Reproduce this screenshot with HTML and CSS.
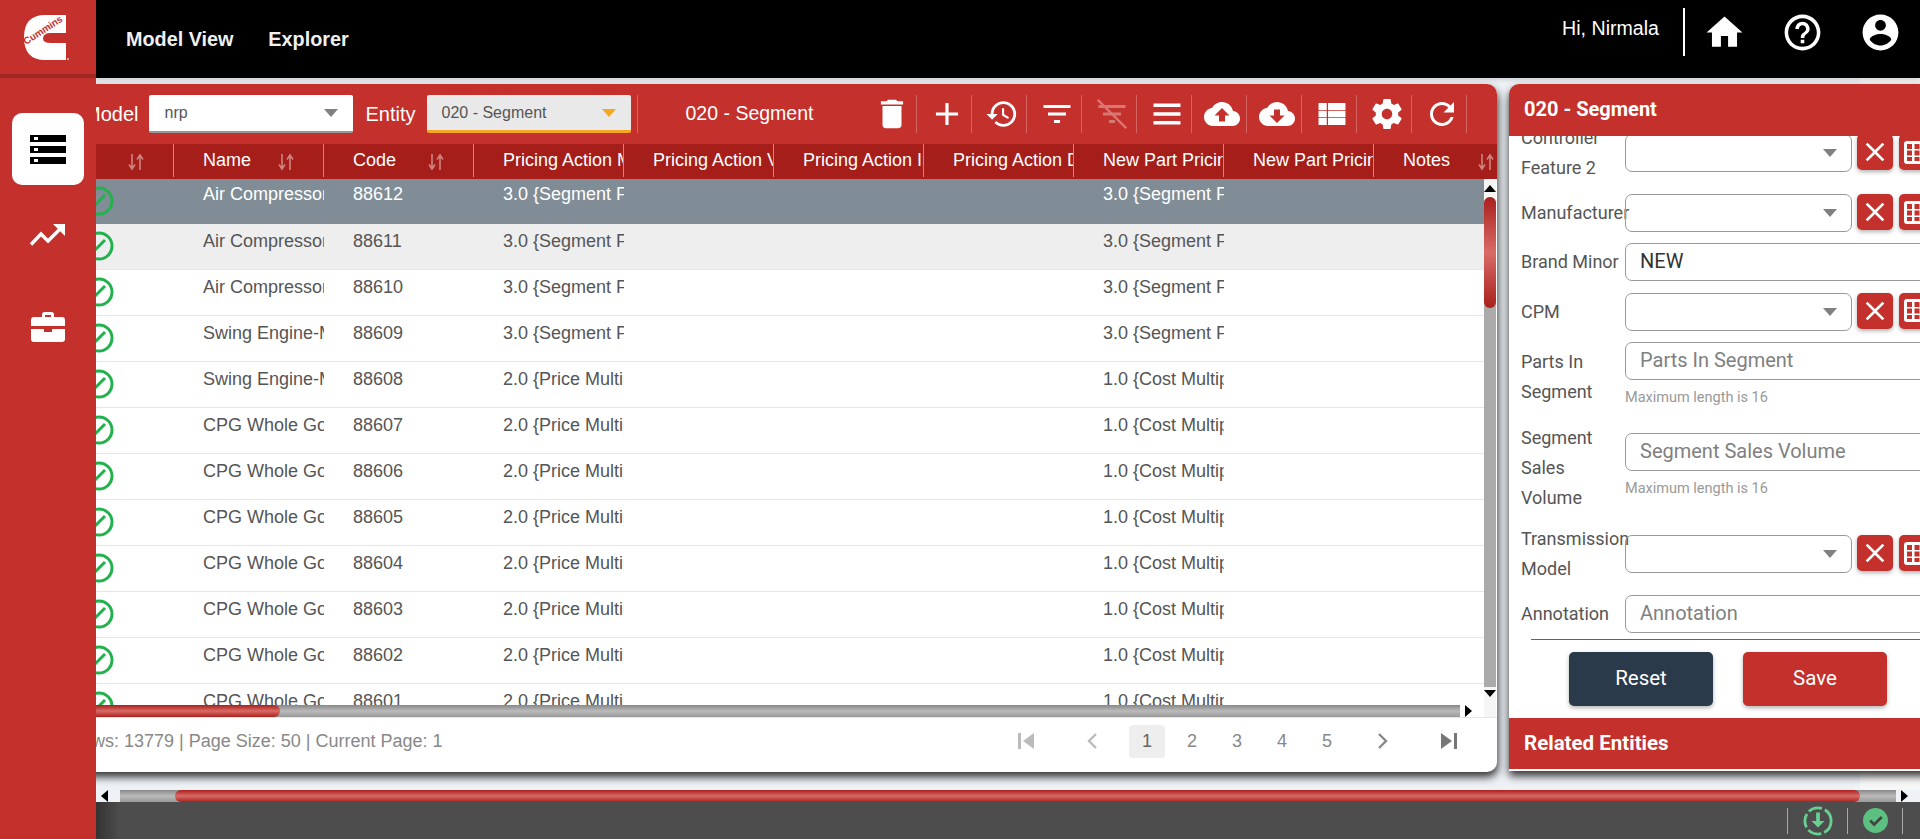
FILE: index.html
```html
<!DOCTYPE html>
<html lang="en">
<head>
    <meta charset="UTF-8">
    <meta name="viewport" content="width=device-width, initial-scale=1.0">
    <title>Model View - Segment</title>
    <link rel="stylesheet" href="styles.css">
</head>
<body>
<div class="app">
    <aside class="sidebar">
        <div class="logo">
            <svg width="96" height="74" viewBox="0 0 96 74">
                <path fill="#fff" d="M66 15V33H51Q43 33 43 38.500Q43 43 51 43H66V60H45Q24 60 24 37.500Q24 15 45 15Z"/>
                <text class="logo-text" x="0" y="0" transform="translate(26 45) rotate(-33)">Cummins</text>
                <circle cx="68" cy="59" r="1" fill="#f0c8c6"/>
            </svg>
        </div>
        <a class="side-item active">
            <svg width="36" height="30" viewBox="0 0 36 30">
                <rect x="0" y="1" width="36" height="7"/><rect x="0" y="12" width="36" height="7"/><rect x="0" y="23" width="36" height="7"/>
                <rect x="4" y="3" width="4" height="3" fill="#fff"/><rect x="4" y="14" width="4" height="3" fill="#fff"/><rect x="4" y="25" width="4" height="3" fill="#fff"/>
            </svg>
        </a>
        <a class="side-item">
            <svg width="38" height="24" viewBox="0 0 38 24">
                <path fill="none" stroke="#fff" stroke-width="3.400" d="M2 21.500L12 11l7 7L31 6"/>
                <path fill="#fff" d="M24 1H36V13Z"/>
            </svg>
        </a>
        <a class="side-item">
            <svg width="36" height="32" viewBox="0 0 36 32">
                <path fill="#fff" d="M12 6V3.500Q12 1 14.500 1h7Q24 1 24 3.500V6h8q3 0 3 3v6H1V9q0-3 3-3zm3-2v2h6V4zM1 18h13v3h8v-3h13v10q0 3-3 3H4q-3 0-3-3z"/>
            </svg>
        </a>
    </aside>

    <div class="main">
        <header class="topbar">
            <nav class="topnav">
                <a>Model View</a>
                <a>Explorer</a>
            </nav>
            <div class="userbox">
                <span class="hello">Hi, Nirmala</span>
                <svg class="top-icon home" viewBox="0 0 24 24"><path d="M10 20v-6h4v6h5v-8h3L12 3 2 12h3v8z"/></svg>
                <svg class="top-icon" viewBox="0 0 24 24"><path d="M11 18h2v-2h-2v2zm1-16C6.480 2 2 6.480 2 12s4.480 10 10 10 10-4.480 10-10S17.520 2 12 2zm0 18c-4.410 0-8-3.590-8-8s3.590-8 8-8 8 3.590 8 8-3.590 8-8 8zm0-14c-2.210 0-4 1.790-4 4h2c0-1.100.9-2 2-2s2 .9 2 2c0 2-3 1.750-3 5h2c0-2.250 3-2.500 3-5 0-2.210-1.790-4-4-4z"/></svg>
                <svg class="top-icon" viewBox="0 0 24 24"><path d="M12 2C6.480 2 2 6.480 2 12s4.480 10 10 10 10-4.480 10-10S17.520 2 12 2zm0 3c1.660 0 3 1.340 3 3s-1.340 3-3 3-3-1.340-3-3 1.340-3 3-3zm0 14.200c-2.500 0-4.710-1.280-6-3.220.03-1.990 4-3.080 6-3.080 1.990 0 5.970 1.090 6 3.080-1.290 1.940-3.500 3.220-6 3.220z"/></svg>
            </div>
        </header>

        <div class="workspace">
            <section class="grid-panel">
                <div class="toolbar">
                    <label class="tool-label">Model</label>
                    <div class="tool-select"><span>nrp</span><i class="caret"></i></div>
                    <label class="tool-label">Entity</label>
                    <div class="tool-select focused"><span>020 - Segment</span><i class="caret"></i></div>
                    <span class="tool-title">020 - Segment</span>
                    <div class="tool-buttons">
                        <button class="tool-btn"><svg viewBox="0 0 24 24" width="38" height="38"><path d="M6 19c0 1.100.9 2 2 2h8c1.100 0 2-.9 2-2V7H6v12zM19 4h-3.500l-1-1h-5l-1 1H5v2h14V4z"/></svg></button>
                        <button class="tool-btn"><svg viewBox="0 0 24 24" width="38" height="38"><path d="M19 13h-6v6h-2v-6H5v-2h6V5h2v6h6v2z"/></svg></button>
                        <button class="tool-btn"><svg viewBox="0 0 24 24" width="34" height="34"><path d="M13 3c-4.970 0-9 4.030-9 9H1l3.890 3.890.07.14L9 12H6c0-3.870 3.130-7 7-7s7 3.130 7 7-3.130 7-7 7c-1.930 0-3.680-.79-4.940-2.060l-1.420 1.420C8.270 19.990 10.510 21 13 21c4.970 0 9-4.030 9-9s-4.030-9-9-9zm-1 5v5l4.280 2.540.72-1.210-3.500-2.080V8H12z"/></svg></button>
                        <button class="tool-btn"><svg viewBox="0 0 24 24" width="36" height="36"><path d="M10 18h4v-2h-4v2zM3 6v2h18V6H3zm3 7h12v-2H6v2z"/></svg></button>
                        <button class="tool-btn off"><svg viewBox="0 0 24 24" width="36" height="36"><path d="M10 18h4v-2h-4v2zM3 6v2h18V6H3zm3 7h12v-2H6v2z"/><path d="M2.500 2.500l19 19" stroke="#fff" stroke-width="1.600"/></svg></button>
                        <button class="tool-btn"><svg viewBox="0 0 24 24" width="36" height="36"><path d="M3 19h18v-2.300H3zm0-5.800h18v-2.400H3zM3 5v2.300h18V5z"/></svg></button>
                        <button class="tool-btn"><svg viewBox="0 0 24 24" width="36" height="36"><path d="M19.350 10.040C18.670 6.590 15.640 4 12 4 9.110 4 6.600 5.640 5.350 8.040 2.340 8.360 0 10.910 0 14c0 3.310 2.690 6 6 6h13c2.760 0 5-2.240 5-5 0-2.640-2.050-4.780-4.650-4.960zM14 13v4h-4v-4H7l5-5 5 5h-3z"/></svg></button>
                        <button class="tool-btn"><svg viewBox="0 0 24 24" width="36" height="36"><path d="M19.350 10.040C18.670 6.590 15.640 4 12 4 9.110 4 6.600 5.640 5.350 8.040 2.340 8.360 0 10.910 0 14c0 3.310 2.690 6 6 6h13c2.760 0 5-2.240 5-5 0-2.640-2.050-4.780-4.650-4.960zM17 13l-5 5-5-5h3V9h4v4h3z"/></svg></button>
                        <button class="tool-btn"><svg viewBox="0 0 24 24" width="38" height="38"><path d="M3.500 5h5.200v4.400H3.500zm6 0h11v4.400h-11zm-6 5h5.200v4H3.500zm6 0h11v4h-11zm-6 4.600h5.200V19H3.500zm6 0h11V19h-11z"/></svg></button>
                        <button class="tool-btn"><svg viewBox="0 0 24 24" width="36" height="36"><path d="M19.430 12.980c.04-.32.07-.64.07-.98s-.03-.66-.07-.98l2.110-1.650c.19-.15.24-.42.12-.64l-2-3.460c-.12-.22-.39-.3-.61-.22l-2.490 1c-.52-.4-1.080-.73-1.690-.98l-.38-2.650C14.460 2.180 14.250 2 14 2h-4c-.25 0-.46.18-.49.42l-.38 2.650c-.61.25-1.170.59-1.690.98l-2.490-1c-.23-.09-.49 0-.61.22l-2 3.460c-.13.22-.07.49.12.64l2.110 1.650c-.04.32-.07.65-.07.98s.03.66.07.98l-2.110 1.650c-.19.15-.24.42-.12.64l2 3.460c.12.22.39.3.61.22l2.490-1c.52.4 1.080.73 1.690.98l.38 2.650c.03.24.24.42.49.42h4c.25 0 .46-.18.49-.42l.38-2.650c.61-.25 1.170-.59 1.690-.98l2.490 1c.23.09.49 0 .61-.22l2-3.460c.12-.22.07-.49-.12-.64l-2.110-1.650zM12 15.500c-1.930 0-3.500-1.570-3.500-3.500s1.570-3.500 3.500-3.500 3.500 1.570 3.500 3.500-1.570 3.500-3.500 3.500z"/></svg></button>
                        <button class="tool-btn"><svg viewBox="0 0 24 24" width="36" height="36"><path d="M17.650 6.350C16.200 4.900 14.210 4 12 4c-4.420 0-7.990 3.580-7.990 8s3.570 8 7.990 8c3.730 0 6.840-2.550 7.730-6h-2.080c-.82 2.330-3.040 4-5.650 4-3.310 0-6-2.690-6-6s2.690-6 6-6c1.660 0 3.140.69 4.220 1.780L13 11h7V4l-2.350 2.350z"/></svg></button>
                    </div>
                </div>

                <div class="grid-head">
                    <div class="th sorted"><span></span><svg class="sort" viewBox="0 0 16 18"><path d="M4 1v14M1 11.500L4 16l3-4.500M12 17V3M9 6.500L12 2l3 4.500"/></svg></div>
                    <div class="th sorted"><span>Name</span><svg class="sort" viewBox="0 0 16 18"><path d="M4 1v14M1 11.500L4 16l3-4.500M12 17V3M9 6.500L12 2l3 4.500"/></svg></div>
                    <div class="th sorted"><span>Code</span><svg class="sort" viewBox="0 0 16 18"><path d="M4 1v14M1 11.500L4 16l3-4.500M12 17V3M9 6.500L12 2l3 4.500"/></svg></div>
                    <div class="th"><span>Pricing Action Method</span></div>
                    <div class="th"><span>Pricing Action Value</span></div>
                    <div class="th"><span>Pricing Action Increase</span></div>
                    <div class="th"><span>Pricing Action Date</span></div>
                    <div class="th"><span>New Part Pricing Method</span></div>
                    <div class="th"><span>New Part Pricing Value</span></div>
                    <div class="th sorted"><span>Notes</span><svg class="sort" viewBox="0 0 16 18"><path d="M4 1v14M1 11.500L4 16l3-4.500M12 17V3M9 6.500L12 2l3 4.500"/></svg></div>
                </div>

                <div class="grid-main">
                    <div class="grid-body">
                        <div class="row selected"><div class="td check"><svg viewBox="0 0 30 30"><circle cx="15" cy="15" r="13"/><path d="M9 21L21 9"/></svg></div><div class="td">Air Compressor</div><div class="td">88612</div><div class="td">3.0 {Segment Floor}</div><div class="td"></div><div class="td"></div><div class="td"></div><div class="td">3.0 {Segment Floor}</div><div class="td"></div><div class="td"></div></div>
                        <div class="row hover"><div class="td check"><svg viewBox="0 0 30 30"><circle cx="15" cy="15" r="13"/><path d="M9 21L21 9"/></svg></div><div class="td">Air Compressor</div><div class="td">88611</div><div class="td">3.0 {Segment Floor}</div><div class="td"></div><div class="td"></div><div class="td"></div><div class="td">3.0 {Segment Floor}</div><div class="td"></div><div class="td"></div></div>
                        <div class="row"><div class="td check"><svg viewBox="0 0 30 30"><circle cx="15" cy="15" r="13"/><path d="M9 21L21 9"/></svg></div><div class="td">Air Compressor</div><div class="td">88610</div><div class="td">3.0 {Segment Floor}</div><div class="td"></div><div class="td"></div><div class="td"></div><div class="td">3.0 {Segment Floor}</div><div class="td"></div><div class="td"></div></div>
                        <div class="row"><div class="td check"><svg viewBox="0 0 30 30"><circle cx="15" cy="15" r="13"/><path d="M9 21L21 9"/></svg></div><div class="td">Swing Engine-Mounted</div><div class="td">88609</div><div class="td">3.0 {Segment Floor}</div><div class="td"></div><div class="td"></div><div class="td"></div><div class="td">3.0 {Segment Floor}</div><div class="td"></div><div class="td"></div></div>
                        <div class="row"><div class="td check"><svg viewBox="0 0 30 30"><circle cx="15" cy="15" r="13"/><path d="M9 21L21 9"/></svg></div><div class="td">Swing Engine-Mounted</div><div class="td">88608</div><div class="td">2.0 {Price Multiplier}</div><div class="td"></div><div class="td"></div><div class="td"></div><div class="td">1.0 {Cost Multiplier}</div><div class="td"></div><div class="td"></div></div>
                        <div class="row"><div class="td check"><svg viewBox="0 0 30 30"><circle cx="15" cy="15" r="13"/><path d="M9 21L21 9"/></svg></div><div class="td">CPG Whole Goods</div><div class="td">88607</div><div class="td">2.0 {Price Multiplier}</div><div class="td"></div><div class="td"></div><div class="td"></div><div class="td">1.0 {Cost Multiplier}</div><div class="td"></div><div class="td"></div></div>
                        <div class="row"><div class="td check"><svg viewBox="0 0 30 30"><circle cx="15" cy="15" r="13"/><path d="M9 21L21 9"/></svg></div><div class="td">CPG Whole Goods</div><div class="td">88606</div><div class="td">2.0 {Price Multiplier}</div><div class="td"></div><div class="td"></div><div class="td"></div><div class="td">1.0 {Cost Multiplier}</div><div class="td"></div><div class="td"></div></div>
                        <div class="row"><div class="td check"><svg viewBox="0 0 30 30"><circle cx="15" cy="15" r="13"/><path d="M9 21L21 9"/></svg></div><div class="td">CPG Whole Goods</div><div class="td">88605</div><div class="td">2.0 {Price Multiplier}</div><div class="td"></div><div class="td"></div><div class="td"></div><div class="td">1.0 {Cost Multiplier}</div><div class="td"></div><div class="td"></div></div>
                        <div class="row"><div class="td check"><svg viewBox="0 0 30 30"><circle cx="15" cy="15" r="13"/><path d="M9 21L21 9"/></svg></div><div class="td">CPG Whole Goods</div><div class="td">88604</div><div class="td">2.0 {Price Multiplier}</div><div class="td"></div><div class="td"></div><div class="td"></div><div class="td">1.0 {Cost Multiplier}</div><div class="td"></div><div class="td"></div></div>
                        <div class="row"><div class="td check"><svg viewBox="0 0 30 30"><circle cx="15" cy="15" r="13"/><path d="M9 21L21 9"/></svg></div><div class="td">CPG Whole Goods</div><div class="td">88603</div><div class="td">2.0 {Price Multiplier}</div><div class="td"></div><div class="td"></div><div class="td"></div><div class="td">1.0 {Cost Multiplier}</div><div class="td"></div><div class="td"></div></div>
                        <div class="row"><div class="td check"><svg viewBox="0 0 30 30"><circle cx="15" cy="15" r="13"/><path d="M9 21L21 9"/></svg></div><div class="td">CPG Whole Goods</div><div class="td">88602</div><div class="td">2.0 {Price Multiplier}</div><div class="td"></div><div class="td"></div><div class="td"></div><div class="td">1.0 {Cost Multiplier}</div><div class="td"></div><div class="td"></div></div>
                        <div class="row"><div class="td check"><svg viewBox="0 0 30 30"><circle cx="15" cy="15" r="13"/><path d="M9 21L21 9"/></svg></div><div class="td">CPG Whole Goods</div><div class="td">88601</div><div class="td">2.0 {Price Multiplier}</div><div class="td"></div><div class="td"></div><div class="td"></div><div class="td">1.0 {Cost Multiplier}</div><div class="td"></div><div class="td"></div></div>
                    </div>
                    <div class="vscroll">
                        <i class="arrow up"></i>
                        <div class="vtrack"><div class="vthumb"></div></div>
                        <i class="arrow down"></i>
                    </div>
                    <div class="hscroll">
                        <div class="htrack"><div class="hthumb"></div></div>
                        <i class="arrow right"></i>
                    </div>
                    <div class="corner"></div>
                </div>

                <footer class="grid-foot">
                    <span class="foot-info">Total Rows: 13779 | Page Size: 50 | Current Page: 1</span>
                    <div class="pager">
                        <a class="pg dim edge"><svg viewBox="0 0 16 16" width="16" height="16"><path d="M0 0h3v16H0zM16 0v16L5 8z"/></svg></a>
                        <a class="pg dim edge"><svg viewBox="0 0 12 16" width="12" height="16"><path d="M10 1L3 8l7 7" fill="none" stroke="currentColor" stroke-width="2.400"/></svg></a>
                        <a class="pg current">1</a>
                        <a class="pg">2</a>
                        <a class="pg">3</a>
                        <a class="pg">4</a>
                        <a class="pg">5</a>
                        <a class="pg next"><svg viewBox="0 0 12 16" width="12" height="16"><path d="M2 1l7 7-7 7" fill="none" stroke="currentColor" stroke-width="2.400"/></svg></a>
                        <a class="pg last"><svg viewBox="0 0 16 16" width="16" height="16"><path d="M0 0v16L11 8zM13 0h3v16h-3z"/></svg></a>
                    </div>
                </footer>
            </section>

            <section class="side-panel">
                <h2 class="side-title">020 - Segment</h2>
                <div class="side-body">
                    <form class="side-form">
                        <div class="form-row">
                            <label>Controller Feature 2</label>
                            <div class="field-line"><div class="f-select"><i class="caret"></i></div><button type="button" class="f-btn"><svg viewBox="0 0 24 24" width="32" height="32"><path d="M19 6.410L17.590 5 12 10.590 6.410 5 5 6.410 10.590 12 5 17.590 6.410 19 12 13.410 17.590 19 19 17.590 13.410 12z"/></svg></button><button type="button" class="f-btn"><svg class="grid-ico" viewBox="0 0 26 23" width="26" height="23"><rect width="26" height="23" rx="3" fill="#fff"/><path fill="#c4302b" d="M3 3h5v5H3zm7.500 0h5v5h-5zM18 3h5v5h-5zM3 9.500h5v5H3zm7.500 0h5v5h-5zm7.500 0h5v5h-5zM3 16h5v4H3zm7.500 0h5v4h-5zm7.500 0h5v4h-5z"/></svg></button></div>
                        </div>
                        <div class="form-row">
                            <label>Manufacturer</label>
                            <div class="field-line"><div class="f-select"><i class="caret"></i></div><button type="button" class="f-btn"><svg viewBox="0 0 24 24" width="32" height="32"><path d="M19 6.410L17.590 5 12 10.590 6.410 5 5 6.410 10.590 12 5 17.590 6.410 19 12 13.410 17.590 19 19 17.590 13.410 12z"/></svg></button><button type="button" class="f-btn"><svg class="grid-ico" viewBox="0 0 26 23" width="26" height="23"><rect width="26" height="23" rx="3" fill="#fff"/><path fill="#c4302b" d="M3 3h5v5H3zm7.500 0h5v5h-5zM18 3h5v5h-5zM3 9.500h5v5H3zm7.500 0h5v5h-5zm7.500 0h5v5h-5zM3 16h5v4H3zm7.500 0h5v4h-5zm7.500 0h5v4h-5z"/></svg></button></div>
                        </div>
                        <div class="form-row">
                            <label>Brand Minor</label>
                            <div class="field-line"><div class="f-input">NEW</div></div>
                        </div>
                        <div class="form-row">
                            <label>CPM</label>
                            <div class="field-line"><div class="f-select"><i class="caret"></i></div><button type="button" class="f-btn"><svg viewBox="0 0 24 24" width="32" height="32"><path d="M19 6.410L17.590 5 12 10.590 6.410 5 5 6.410 10.590 12 5 17.590 6.410 19 12 13.410 17.590 19 19 17.590 13.410 12z"/></svg></button><button type="button" class="f-btn"><svg class="grid-ico" viewBox="0 0 26 23" width="26" height="23"><rect width="26" height="23" rx="3" fill="#fff"/><path fill="#c4302b" d="M3 3h5v5H3zm7.500 0h5v5h-5zM18 3h5v5h-5zM3 9.500h5v5H3zm7.500 0h5v5h-5zm7.500 0h5v5h-5zM3 16h5v4H3zm7.500 0h5v4h-5zm7.500 0h5v4h-5z"/></svg></button></div>
                        </div>
                        <div class="form-row">
                            <label>Parts In Segment</label>
                            <div class="field-stack"><div class="f-input empty">Parts In Segment</div><div class="hint">Maximum length is 16</div></div>
                        </div>
                        <div class="form-row">
                            <label>Segment Sales Volume</label>
                            <div class="field-stack"><div class="f-input empty">Segment Sales Volume</div><div class="hint">Maximum length is 16</div></div>
                        </div>
                        <div class="form-row">
                            <label>Transmission Model</label>
                            <div class="field-line"><div class="f-select"><i class="caret"></i></div><button type="button" class="f-btn"><svg viewBox="0 0 24 24" width="32" height="32"><path d="M19 6.410L17.590 5 12 10.590 6.410 5 5 6.410 10.590 12 5 17.590 6.410 19 12 13.410 17.590 19 19 17.590 13.410 12z"/></svg></button><button type="button" class="f-btn"><svg class="grid-ico" viewBox="0 0 26 23" width="26" height="23"><rect width="26" height="23" rx="3" fill="#fff"/><path fill="#c4302b" d="M3 3h5v5H3zm7.500 0h5v5h-5zM18 3h5v5h-5zM3 9.500h5v5H3zm7.500 0h5v5h-5zm7.500 0h5v5h-5zM3 16h5v4H3zm7.500 0h5v4h-5zm7.500 0h5v4h-5z"/></svg></button></div>
                        </div>
                        <div class="form-row">
                            <label>Annotation</label>
                            <div class="field-line"><div class="f-input empty">Annotation</div></div>
                        </div>
                    </form>
                    <div class="form-actions">
                        <button type="button" class="btn reset">Reset</button>
                        <button type="button" class="btn save">Save</button>
                    </div>
                </div>
                <h2 class="side-related">Related Entities</h2>
            </section>
        </div>

        <div class="page-scroll">
            <i class="arrow left"></i>
            <div class="page-track"><div class="page-thumb"></div></div>
            <i class="arrow right"></i>
        </div>

        <footer class="statusbar">
            <span class="status-sep"></span>
            <svg width="30" height="30" viewBox="0 0 32 32"><circle cx="16" cy="16" r="14" fill="none" stroke="#69d092" stroke-width="3" stroke-dasharray="15 3.300"/><path fill="#69d092" d="M14 7h4v9h5l-7 7-7-7h5z"/></svg>
            <span class="status-sep"></span>
            <svg width="25" height="25" viewBox="0 0 28 28"><circle cx="14" cy="14" r="14" fill="#5cc080"/><path d="M8 14l4.500 4.500L21 10" fill="none" stroke="#444" stroke-width="3"/></svg>
            <span class="status-sep"></span>
        </footer>
    </div>
</div>
</body>
</html>
```

FILE: styles.css
```css
* {
    box-sizing: border-box;
}
html, body {
    margin: 0;
    height: 100%;
    overflow: hidden;
}
body {
    font-family: 'Liberation Sans', Arial, sans-serif;
    font-size: 18px;
    color: #555;
    background-color: #eef2f6;
}
button {
    font-family: inherit;
    border: none;
    padding: 0;
    cursor: pointer;
}

.app {
    display: flex;
    height: 839px;
    width: 1920px;
    overflow: hidden;
}

/* left rail, sits over the scrolled content */
.sidebar {
    flex: none;
    width: 96px;
    background-color: #c4302b;
    position: relative;
    z-index: 5;
    display: flex;
    flex-direction: column;
    align-items: center;
}
.logo {
    width: 96px;
    height: 78px;
    border-bottom: 4px solid #9e2824;
}
.logo svg {
    display: block;
}
.logo-text {
    font-family: 'Liberation Sans', Arial, sans-serif;
    font-size: 9.800px;
    font-weight: 700;
    fill: #c4302b;
}
.side-item {
    width: 72px;
    height: 72px;
    display: flex;
    align-items: center;
    justify-content: center;
    border-radius: 10px;
    margin-top: 35px;
}
.side-item + .side-item {
    margin-top: 14px;
}
.side-item.active {
    background-color: #fff;
    margin-top: 35px;
}
.side-item.active svg {
    fill: #000;
}
.side-item + .side-item + .side-item {
    margin-top: 20px;
}

.main {
    flex: 1;
    min-width: 0;
    display: flex;
    flex-direction: column;
}

/* top bar */
.topbar {
    flex: none;
    height: 78px;
    background-color: #000;
    color: #fff;
    display: flex;
    justify-content: space-between;
    padding: 0 18px 0 30px;
    position: relative;
    z-index: 3;
    box-shadow: 0 2px 4px rgba(0,0,0,0.15);
}
.topnav {
    display: flex;
    align-items: center;
    gap: 35px;
    font-weight: 700;
    font-size: 19.800px;
    color: #f0f0f0;
}
.userbox {
    display: flex;
    align-items: center;
    height: 64px;
}
.hello {
    font-size: 19.600px;
    padding-right: 24px;
    margin-right: 18px;
    height: 48px;
    line-height: 40px;
    border-right: 2px solid #fff;
}
.top-icon {
    width: 43px;
    height: 43px;
    fill: #fff;
    margin-right: 35px;
}
.top-icon:last-child {
    margin-right: 0;
}

/* workspace */
.workspace {
    flex: 1;
    min-height: 0;
    display: flex;
    gap: 12px;
    padding-top: 6px;
    background: linear-gradient(to right, #eef2f6 1764px, #f7f7f7 1764px);
}
.grid-panel {
    flex: none;
    width: 1473px;
    height: 688px;
    margin-left: -72px;
    background-color: #fff;
    border-radius: 10px;
    overflow: hidden;
    display: flex;
    flex-direction: column;
    box-shadow: 1px 5px 9px rgba(0,0,0,0.8);
}

.toolbar {
    flex: none;
    height: 60px;
    background-color: #c4302b;
    color: #fff;
    display: flex;
    align-items: center;
    padding: 0 30px 0 60px;
}
.tool-label {
    font-size: 20px;
    margin-right: 11px;
}
.tool-select {
    width: 204px;
    height: 38px;
    background-color: #fff;
    color: #555;
    border-radius: 2px;
    border-bottom: 2px solid #999;
    padding: 0 15px;
    display: flex;
    align-items: center;
    justify-content: space-between;
    font-size: 16px;
    margin-right: 12px;
}
.tool-select.focused {
    background-color: #e9e9e9;
    border-bottom: 3px solid #f5a623;
    margin-right: 6px;
}
.tool-select.focused .caret {
    border-top-color: #f5a623;
}
.caret {
    display: block;
    width: 0;
    height: 0;
    border-left: 7.500px solid transparent;
    border-right: 7.500px solid transparent;
    border-top: 8px solid #808080;
}
.tool-title {
    font-size: 19.500px;
    height: 38px;
    line-height: 36px;
    padding-left: 48px;
    border-left: 1px solid rgba(255,255,255,0.25);
}
.tool-buttons {
    margin-left: auto;
    display: flex;
}
.tool-btn {
    width: 55px;
    height: 38px;
    background: none;
    border-right: 1px solid rgba(255,255,255,0.25);
    padding-left: 6px;
    display: flex;
    align-items: center;
    justify-content: center;
}
.tool-btn svg {
    fill: #fff;
    flex: none;
}
.tool-btn.off svg {
    opacity: 0.35;
}

/* grid */
.grid-head {
    flex: none;
    height: 35px;
    background-color: #a51e1a;
    display: flex;
}
.th {
    flex: none;
    width: 150px;
    height: 33px;
    color: #fff;
    padding-left: 29px;
    border-right: 1px solid rgba(255,255,255,0.45);
    display: flex;
    align-items: center;
    overflow: hidden;
    white-space: nowrap;
}
.th:last-child {
    border-right: none;
}
.th.sorted span {
    flex: none;
    width: 75px;
}
.sort {
    flex: none;
    width: 16px;
    height: 18px;
    fill: none;
    stroke: rgba(255,255,255,0.45);
    stroke-width: 1.600;
    margin-top: 3px;
}
.grid-main {
    flex: none;
    height: 538px;
    display: grid;
    grid-template-columns: 1460px 12px;
    grid-template-rows: 526px 12px;
}
.grid-body {
    overflow: hidden;
}
.row {
    display: flex;
    height: 46px;
    border-bottom: 1px solid #e6e6e6;
}
.row:first-child {
    height: 45px;
    border-bottom: none;
}
.row.selected {
    background-color: #808d96;
    color: #fff;
}
.row.selected .td {
    padding-top: 4px;
}
.row.hover {
    background-color: #eee;
}
.td {
    flex: none;
    width: 150px;
    padding: 6px 0 0 29px;
    line-height: 22px;
    white-space: nowrap;
    overflow: hidden;
}
.td.check,
.row.selected .td.check {
    padding: 7px 0 0 60px;
}
.td.check svg {
    display: block;
    width: 30px;
    height: 30px;
    fill: none;
    stroke: #22b14c;
    stroke-width: 3;
}

/* fake scrollbars, same look as the custom webkit ones */
.arrow {
    display: block;
    width: 0;
    height: 0;
    flex: none;
}
.arrow.up {
    border-left: 6px solid transparent;
    border-right: 6px solid transparent;
    border-bottom: 7px solid #000;
    margin: 6px 0 5px;
}
.arrow.down {
    border-left: 6px solid transparent;
    border-right: 6px solid transparent;
    border-top: 7px solid #000;
    margin-top: 3px;
}
.arrow.right {
    border-top: 6px solid transparent;
    border-bottom: 6px solid transparent;
    border-left: 7px solid #000;
}
.arrow.left {
    border-top: 6px solid transparent;
    border-bottom: 6px solid transparent;
    border-right: 7px solid #000;
}
.vscroll {
    display: flex;
    flex-direction: column;
    background-color: #f5f5f5;
}
.vtrack {
    height: 490px;
    background-color: #aaa;
    border-radius: 6px 6px 0 0;
}
.vthumb {
    height: 111px;
    border-radius: 6px;
    background: linear-gradient(to bottom, #a9201c, #d96b67 50%, #a9201c);
}
.hscroll {
    display: flex;
    align-items: center;
    background-color: #fff;
    gap: 5px;
}
.htrack {
    width: 1436px;
    height: 12px;
    background: linear-gradient(to bottom, #888, #bbb 50%, #999);
}
.hthumb {
    width: 256px;
    height: 12px;
    border-radius: 0 6px 6px 0;
    background: linear-gradient(to bottom, #a9201c, #d96b67 50%, #a9201c);
}
.corner {
    background-color: #f5f5f5;
}

.grid-foot {
    flex: 1;
    display: flex;
    align-items: center;
    justify-content: space-between;
    padding: 0 30px 8px 2px;
    border-top: 1px solid #e6e6e6;
}
.foot-info {
    color: #888;
}
.pager {
    display: flex;
    align-items: center;
    gap: 9px;
}
.pg {
    width: 36px;
    height: 33px;
    border-radius: 4px;
    color: #888;
    fill: #777;
    display: flex;
    align-items: center;
    justify-content: center;
}
.pg.dim {
    color: #bbb;
    fill: #bbb;
}
.pg.edge {
    margin-right: 21px;
}
.pg.edge + .pg.edge {
    margin-right: 10px;
}
.pg.current {
    background-color: #eee;
    color: #666;
}
.pg.next {
    margin-left: 11px;
    margin-right: 21px;
}

/* right form panel */
.side-panel {
    flex: none;
    width: 440px;
    height: 687px;
    background-color: #fff;
    border-radius: 10px 0 0 0;
    display: flex;
    flex-direction: column;
    padding-bottom: 2px;
    box-shadow: 0 5px 9px rgba(0,0,0,0.8);
    font-family: Roboto, 'Liberation Sans', sans-serif;
}
.side-title,
.side-related {
    flex: none;
    margin: 0;
    background-color: #c4302b;
    color: #fff;
    font-size: 20px;
    font-weight: 700;
    padding-left: 15px;
}
.side-title {
    height: 52px;
    line-height: 50px;
    border-radius: 10px 0 0 0;
}
.side-related {
    height: 51px;
    line-height: 50px;
    font-size: 20.500px;
}
.side-body {
    flex: 1;
    min-height: 0;
    overflow: hidden;
    display: flex;
    flex-direction: column;
}
.side-form {
    flex: none;
    margin-top: -13px;
    padding-left: 12px;
    display: flex;
    flex-direction: column;
    gap: 11.200px;
}
.form-row {
    display: flex;
    align-items: center;
    color: #555;
}
.form-row label {
    flex: none;
    width: 104px;
    line-height: 30px;
    white-space: normal;
    font-size: 18px;
}
.field-line {
    display: flex;
    gap: 5px;
}
.field-stack {
    display: flex;
    flex-direction: column;
}
.f-select {
    width: 227px;
    height: 38px;
    border: 1px solid #999;
    border-radius: 7px;
    display: flex;
    align-items: center;
    justify-content: flex-end;
    padding-right: 14px;
}
.f-input {
    width: 400px;
    height: 38px;
    border: 1px solid #999;
    border-radius: 7px;
    padding-left: 14px;
    line-height: 34px;
    font-size: 20px;
    color: #333;
}
.f-input.empty {
    color: #808080;
}
.hint {
    height: 32px;
    font-size: 14.500px;
    line-height: 36px;
    color: #999;
}
.f-btn {
    flex: none;
    width: 36px;
    height: 36px;
    background-color: #c4302b;
    border-radius: 5px;
    box-shadow: 0 2px 4px rgba(0,0,0,0.3);
    display: flex;
    align-items: center;
    justify-content: center;
}
.f-btn svg {
    fill: #fff;
    flex: none;
}
.f-btn + .f-btn {
    margin-left: 1px;
}
.form-actions {
    margin: 6px 0 0 22px;
    padding-top: 12px;
    border-top: 1px solid #5a6570;
    display: flex;
    gap: 30px;
    padding-left: 38px;
}
.btn {
    width: 144px;
    height: 54px;
    padding-bottom: 2px;
    color: #fff;
    font-size: 20.500px;
    border-radius: 5px;
    box-shadow: 0 2px 4px rgba(0,0,0,0.3);
}
.btn.reset {
    background-color: #2b3a4a;
}
.btn.save {
    background-color: #c4302b;
}

/* page level scrollbar */
.page-scroll {
    flex: none;
    height: 12px;
    display: flex;
    align-items: center;
    padding-left: 5px;
}
.page-track {
    width: 1776px;
    height: 12px;
    margin: 0 5px 0 12px;
    padding-left: 55px;
    background: linear-gradient(to bottom, #888, #bbb 50%, #999);
}
.page-thumb {
    width: 1685px;
    height: 12px;
    border-radius: 6px;
    background: linear-gradient(to bottom, #a9201c, #d96b67 50%, #a9201c);
}

/* status bar */
.statusbar {
    flex: none;
    height: 37px;
    background: linear-gradient(to right, #333, #4d4d4d 24px);
    display: flex;
    align-items: center;
    justify-content: flex-end;
    padding-right: 17px;
    gap: 14.500px;
}
.status-sep {
    width: 1px;
    height: 26px;
    background-color: #aaa;
}
```
